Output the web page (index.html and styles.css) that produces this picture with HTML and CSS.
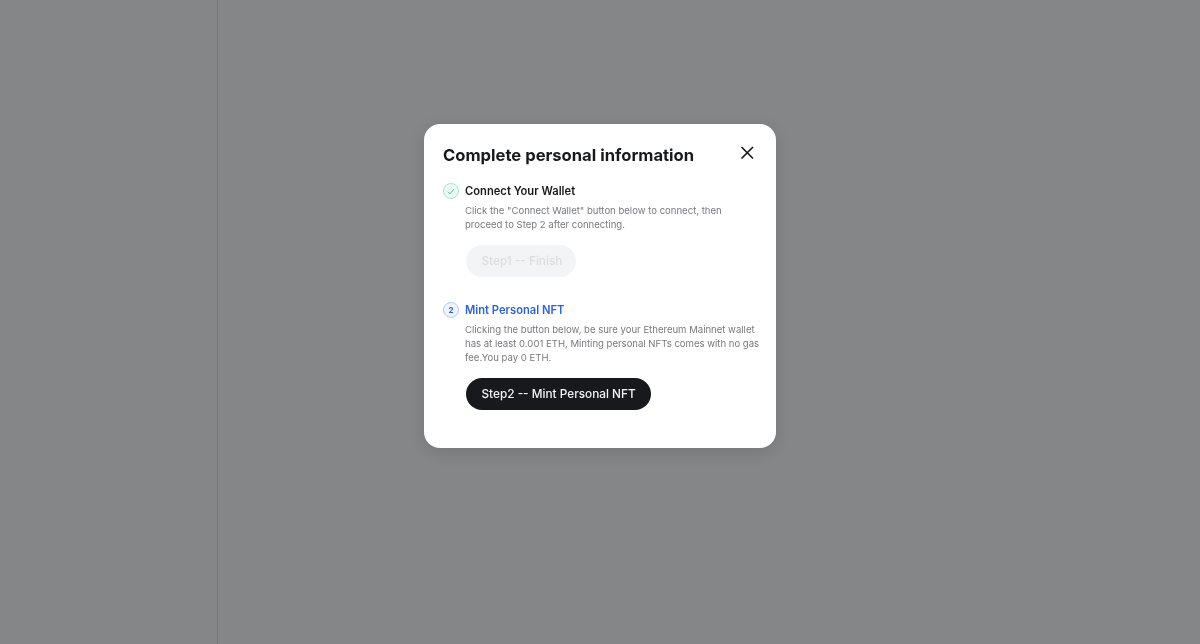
FILE: index.html
```html
<!DOCTYPE html>
<html lang="en">

<head>
    <meta charset="UTF-8">
    <title>Complete personal information</title>
    <link rel="stylesheet" href="styles.css">
</head>

<body>
    <div class="page">
        <div class="sidebar"></div>
        <div class="content"></div>
    </div>

    <div class="overlay">
        <div class="modal">
            <div class="modal-head">
                <h2>Complete personal information</h2>
                <button class="close" aria-label="Close">
                    <svg width="14" height="14" viewBox="0 0 14 14" fill="none" stroke="#17191c" stroke-width="1.7">
                        <path d="M1.5 1L13 12.5M13 1L1.5 12.5" />
                    </svg>
                </button>
            </div>

            <div class="step">
                <div class="step-title">
                    <span class="badge badge-done">
                        <svg width="8" height="7" viewBox="0 0 9 8" fill="none" stroke="#5fb89c" stroke-width="1.1">
                            <path d="M1 4.2L3.4 6.6L8 1.2" />
                        </svg>
                    </span>
                    <span>Connect Your Wallet</span>
                </div>
                <p>Click the "Connect Wallet" button below to connect, then proceed to Step 2 after connecting.</p>
                <button class="btn btn-disabled">Step1 -- Finish</button>
            </div>

            <div class="step step-active">
                <div class="step-title">
                    <span class="badge badge-current">2</span>
                    <span>Mint Personal NFT</span>
                </div>
                <p>Clicking the button below, be sure your Ethereum Mainnet wallet has at least 0.001 ETH, Minting personal NFTs comes with no gas fee.You pay 0 ETH.</p>
                <button class="btn btn-dark">Step2 -- Mint Personal NFT</button>
            </div>
        </div>
    </div>
</body>

</html>
```

FILE: styles.css
```css
* {
    box-sizing: border-box;
}

html,
body {
    height: 100%;
}

body {
    margin: 0;
    font-family: Inter, "Noto Sans", sans-serif;
    background-color: #858688;
    overflow: hidden;
}

.page {
    display: flex;
    height: 100%;
}

.sidebar {
    width: 218px;
    border-right: 1px solid #76777a;
}

.content {
    flex: 1;
}

.overlay {
    position: fixed;
    top: 0;
    left: 0;
    right: 0;
    bottom: 0;
    display: flex;
    justify-content: center;
    align-items: flex-start;
    padding-top: 124px;
}

.modal {
    width: 352px;
    height: 324px;
    padding: 19px 13px 0 19px;
    background: white;
    border-radius: 16px;
    box-shadow: 0 4px 16px rgba(0, 0, 0, 0.12);
}

.modal-head {
    display: flex;
    justify-content: space-between;
    align-items: flex-start;
    height: 24px;
    margin-bottom: 16px;
}

.modal-head h2 {
    margin: 0;
    font-size: 16.6px;
    line-height: 24px;
    font-weight: 700;
    color: #17191c;
}

.close {
    display: flex;
    margin: 3px 9px 0 0;
    padding: 0;
    background: none;
    border: none;
    cursor: pointer;
}

.step {
    margin-bottom: 25px;
}

.step-title {
    display: flex;
    align-items: center;
    gap: 6px;
    height: 16px;
    font-size: 11.2px;
    font-weight: 600;
    color: #17191c;
}

.step-active .step-title {
    color: #2f62d6;
}

.badge {
    display: flex;
    align-items: center;
    justify-content: center;
    width: 16px;
    height: 16px;
    border-radius: 50%;
    font-size: 8px;
    font-weight: 700;
}

.badge-done {
    background: #eafaf5;
    border: 1px solid #a5e6d3;
}

.badge-current {
    background: #eef3fd;
    border: 1px solid #b5caf3;
    color: #2f62d6;
}

.step p {
    margin: 5px 3px 13px 22px;
    font-size: 9.55px;
    line-height: 14px;
    color: #77797d;
}

.btn {
    display: block;
    height: 32px;
    margin-left: 22.5px;
    padding: 0 16px;
    border: none;
    border-radius: 16px;
    font-family: inherit;
    font-size: 11.8px;
    font-weight: 500;
    white-space: nowrap;
}

.btn-disabled {
    width: 110px;
    background: #f3f4f6;
    color: #dcdde0;
}

.btn-dark {
    width: 185px;
    background: #17191c;
    color: #f2f2f3;
    cursor: pointer;
}
```
